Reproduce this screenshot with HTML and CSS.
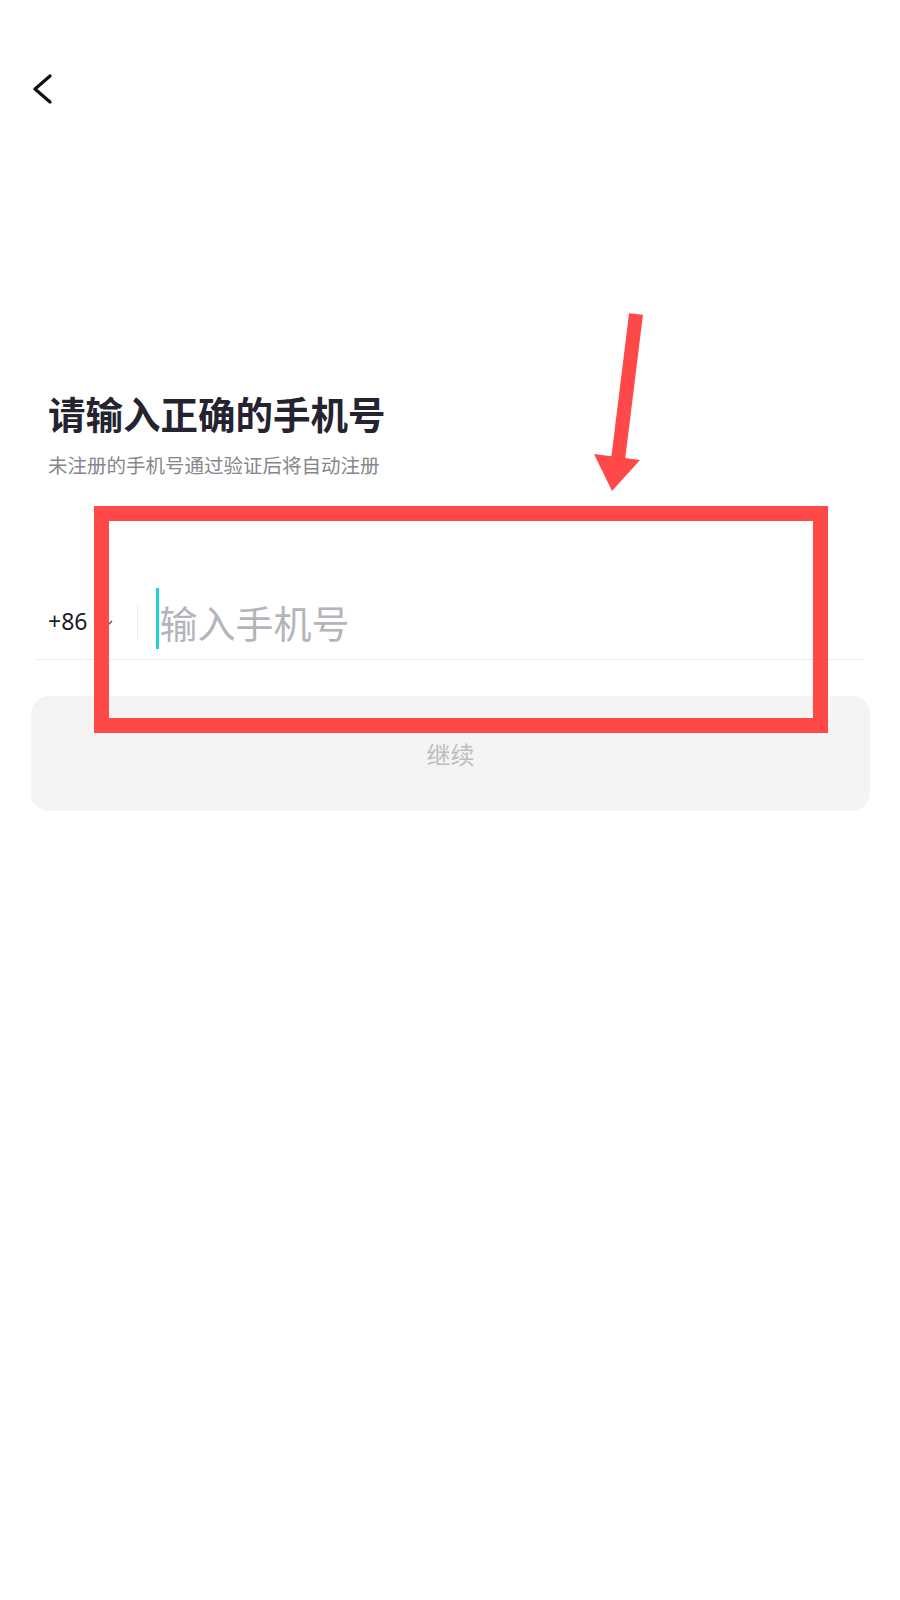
FILE: index.html
```html
<!DOCTYPE html>
<html lang="zh-CN">
<head>
  <meta charset="UTF-8" />
  <meta name="viewport" content="width=device-width, initial-scale=1.0" />
  <title>手机号登录</title>
  <link rel="stylesheet" href="styles.css">
</head>
<body>
  <div class="page">
    <div class="nav">
      <svg class="back" width="22" height="32" viewBox="0 0 22 32">
        <polyline points="18,2 3,15 18,28" fill="none" stroke="#111" stroke-width="3.2" stroke-linecap="round" stroke-linejoin="round" />
      </svg>
    </div>

    <div class="intro">
      <h1>请输入正确的手机号</h1>
      <p class="hint">未注册的手机号通过验证后将自动注册</p>
    </div>

    <div class="phone-row">
      <span class="code">+86</span>
      <svg class="drop" width="10" height="8" viewBox="0 0 10 8">
        <polyline points="1,2 5,6 9,2" fill="none" stroke="#555" stroke-width="1.4" />
      </svg>
      <span class="divider"></span>
      <span class="cursor"></span>
      <span class="placeholder">输入手机号</span>
    </div>

    <div class="next-btn">继续</div>

    <!-- annotation overlay -->
    <div class="mark-box"></div>
    <svg class="mark-arrow" width="80" height="200" viewBox="580 300 80 200">
      <line x1="636" y1="314" x2="618" y2="460" stroke="#ff4848" stroke-width="14" />
      <polygon points="594,454 640,460 612,491" fill="#ff4848" />
    </svg>
  </div>
</body>
</html>
```

FILE: styles.css
```css
body {
  margin: 0;
  padding: 0;
  background: #ffffff;
  font-family: "Noto Sans", "Noto Sans CJK SC", sans-serif;
}

.page {
  position: relative;
  width: 900px;
  min-height: 1600px;
}

.nav {
  height: 56px;
  padding: 74px 0 0 32px;
}

.back {
  display: block;
}

.intro {
  margin-top: 262px;
  padding: 0 48px;
}

.intro h1 {
  margin: 0;
  font-size: 37.5px;
  line-height: 45px;
  font-weight: 700;
  color: #24232f;
}

.hint {
  margin: 16px 0 0 0;
  font-size: 19.5px;
  line-height: 26px;
  color: #86868c;
}

.phone-row {
  display: flex;
  align-items: center;
  height: 72px;
  margin: 108px 36px 0 36px;
  padding-left: 12px;
  border-bottom: 1px solid #eeeeee;
}

.code {
  margin-bottom: 4px;
  font-size: 23px;
  color: #1c1c1f;
}

.drop {
  margin-left: 16px;
}

.divider {
  width: 1px;
  height: 36px;
  margin-left: 24px;
  background: #f0f0f0;
}

.cursor {
  width: 3px;
  height: 61px;
  margin: 0 0 10px 18px;
  background: #1fd0d8;
}

.placeholder {
  font-size: 38px;
  color: #b4b4bb;
  line-height: 1;
}

.next-btn {
  display: flex;
  justify-content: center;
  align-items: center;
  height: 115px;
  margin: 36px 30px 0 31px;
  border-radius: 18px;
  background: #f4f4f4;
  font-size: 24px;
  color: #bdbdbd;
}

.mark-box {
  position: absolute;
  left: 94px;
  top: 506px;
  width: 734px;
  height: 227px;
  box-sizing: border-box;
  border: 15px solid #ff4848;
}

.mark-arrow {
  position: absolute;
  left: 580px;
  top: 300px;
}
```
